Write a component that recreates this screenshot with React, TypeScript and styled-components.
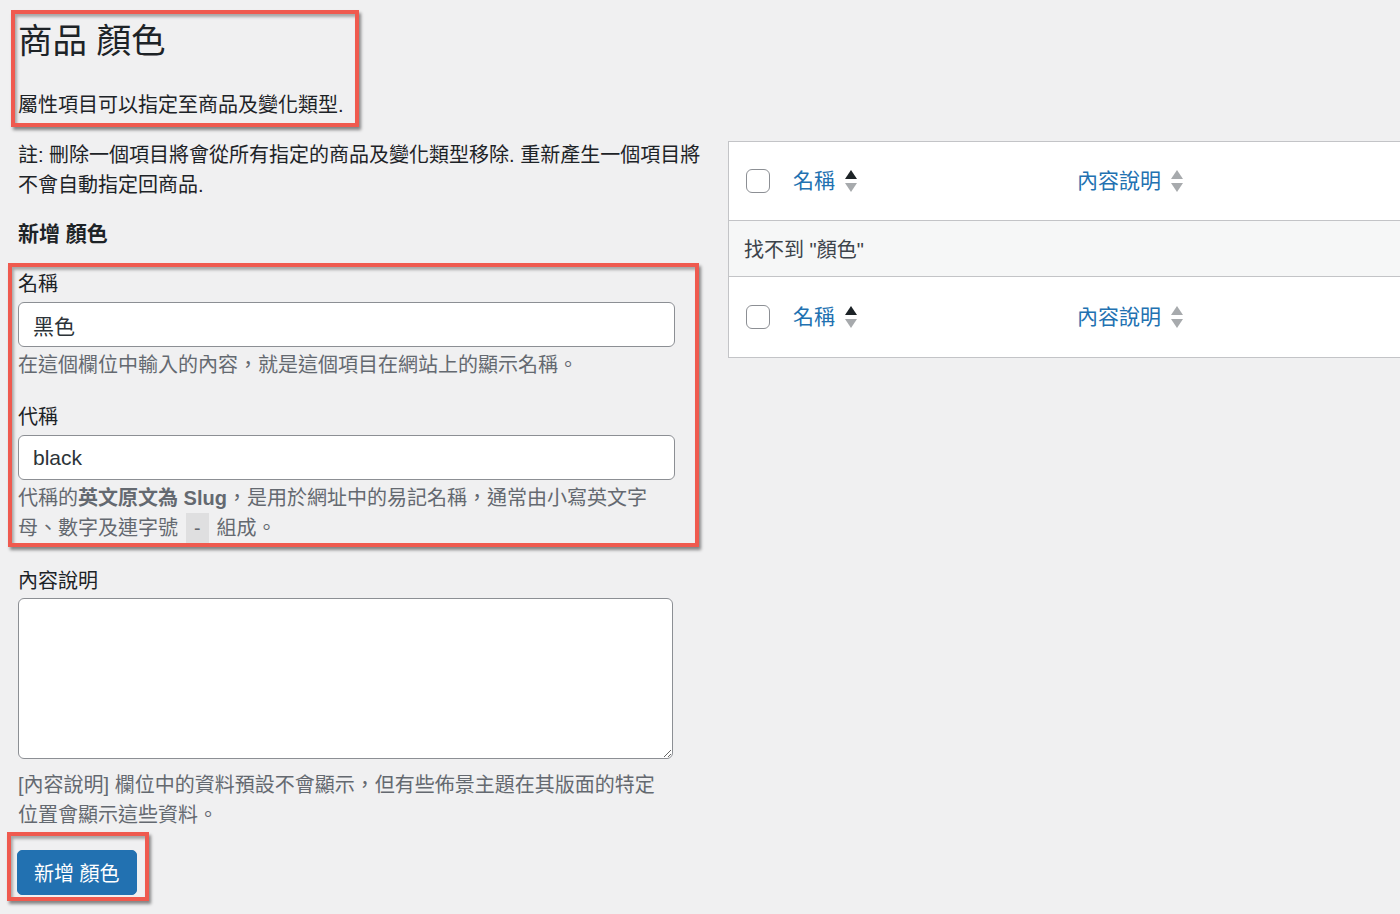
import React from "react";
import styled, { createGlobalStyle } from "styled-components";

const GlobalStyle = createGlobalStyle`
  html, body { margin: 0; padding: 0; background: #f0f0f1; }
  body {
    font-family: "Liberation Sans", "Noto Sans CJK TC", sans-serif;
    color: #1d2327;
    overflow: hidden;
  }
  * { box-sizing: border-box; }
`;

const Page = styled.div`
  width: 1400px;
  height: 914px;
  overflow: hidden;
  padding: 19px 0 0 18px;
`;

const Annotated = styled.div`
  position: relative;
`;

const Highlight = styled.div<{ $top: number; $left: number; $right: number; $bottom: number }>`
  position: absolute;
  top: ${(p) => p.$top}px;
  left: ${(p) => p.$left}px;
  right: ${(p) => p.$right}px;
  bottom: ${(p) => p.$bottom}px;
  border: 4px solid #ef5a4f;
  box-shadow: 2px 3px 3px rgba(0, 0, 0, 0.45), inset 2px 3px 3px rgba(0, 0, 0, 0.3);
  pointer-events: none;
`;

const Header = styled.header`
  position: relative;
  width: 341px;
`;

const Title = styled.h1`
  margin: 0;
  font-size: 34.5px;
  line-height: 44px;
  font-weight: 400;
  color: #1d2327;
`;

const Lead = styled.p`
  margin: 27px 0 0;
  font-size: 20px;
  line-height: 30px;
  white-space: nowrap;
`;

const Columns = styled.div`
  display: flex;
  align-items: flex-start;
  gap: 20px;
  margin-top: 20px;
`;

const LeftCol = styled.div`
  flex: none;
  width: 690px;
`;

const RightCol = styled.div`
  flex: none;
  width: 700px;
  margin-top: 1px;
`;

const Note = styled.p`
  margin: 0;
  font-size: 20px;
  line-height: 30px;
`;

const FormTitle = styled.h2`
  margin: 19px 0 0;
  font-size: 21px;
  line-height: 30px;
  font-weight: 700;
`;

const Fields = styled(Annotated)`
  margin-top: 20px;
`;

const Field = styled.div<{ $gap?: number }>`
  margin-top: ${(p) => p.$gap ?? 0}px;
`;

const Label = styled.label`
  display: block;
  font-size: 20px;
  line-height: 30px;
  color: #1d2327;
`;

const TextInput = styled.input`
  display: block;
  margin-top: 3px;
  width: 657px;
  height: 45px;
  padding: 0 14px;
  border: 1px solid #8c8f94;
  border-radius: 6px;
  background: #fff;
  font-family: inherit;
  font-size: 21px;
  color: #2c3338;
  outline: none;
`;

const TextArea = styled.textarea`
  display: block;
  margin-top: 2px;
  width: 655px;
  height: 161px;
  padding: 8px 12px;
  border: 1px solid #8c8f94;
  border-radius: 6px;
  background: #fff;
  font-family: inherit;
  font-size: 21px;
  color: #2c3338;
  outline: none;
`;

const Help = styled.p<{ $gap?: number }>`
  margin: ${(p) => p.$gap ?? 3}px 0 0;
  max-width: 645px;
  font-size: 20px;
  line-height: 30px;
  color: #646970;

  strong {
    font-weight: 700;
  }
`;

const Code = styled.code`
  display: inline-block;
  margin: 0 8px;
  padding: 0 8px;
  background: rgba(0, 0, 0, 0.07);
  font-family: "Liberation Sans", sans-serif;
  font-size: 19.5px;
  line-height: 30px;
  color: #646970;
`;

const SubmitWrap = styled(Annotated)`
  display: inline-block;
  margin-top: 20px;
  margin-left: -1px;
`;

const PrimaryButton = styled.button`
  display: block;
  height: 45px;
  padding: 0 16px;
  border: 1px solid #2271b1;
  border-radius: 5px;
  background: #2271b1;
  color: #fff;
  font-family: inherit;
  font-size: 20px;
  cursor: pointer;
`;

const Table = styled.div`
  border: 1px solid #c3c4c7;
  background: #fff;
`;

const HeadRow = styled.div<{ $height: number; $last?: boolean }>`
  display: grid;
  grid-template-columns: 64px 284px 1fr;
  align-items: center;
  height: ${(p) => p.$height}px;
  border-bottom: ${(p) => (p.$last ? "none" : "1px solid #c3c4c7")};
`;

const CheckCell = styled.div`
  padding-left: 17px;
  display: flex;
  align-items: center;
`;

const CheckBox = styled.span`
  display: block;
  width: 24px;
  height: 24px;
  border: 1px solid #8c8f94;
  border-radius: 6px;
  background: #fff;
`;

const SortLink = styled.a`
  display: flex;
  align-items: center;
  gap: 10px;
  color: #2271b1;
  font-size: 21px;
  line-height: 30px;
  text-decoration: none;
`;

const EmptyRow = styled.div`
  height: 56px;
  padding-left: 15px;
  display: flex;
  align-items: center;
  background: #f6f7f7;
  border-bottom: 1px solid #c3c4c7;
  font-size: 20px;
  color: #3c434a;
`;

const SortIcon = ({ active }: { active: boolean }) => (
  <svg width="12" height="24" viewBox="0 0 12 24" aria-hidden="true">
    <polygon points="0,10 6,1 12,10" fill={active ? "#1d2327" : "#a7aaad"} />
    <polygon points="0,14 12,14 6,23" fill="#a7aaad" />
  </svg>
);

const TableHeader = ({ height, last }: { height: number; last?: boolean }) => (
  <HeadRow $height={height} $last={last}>
    <CheckCell>
      <CheckBox />
    </CheckCell>
    <SortLink>
      名稱 <SortIcon active />
    </SortLink>
    <SortLink>
      內容說明 <SortIcon active={false} />
    </SortLink>
  </HeadRow>
);

export default function App() {
  return (
    <>
      <GlobalStyle />
      <Page>
        <Header>
          <Title>商品 顏色</Title>
          <Lead>屬性項目可以指定至商品及變化類型.</Lead>
          <Highlight $top={-9} $left={-7} $right={-0} $bottom={-7} />
        </Header>

        <Columns>
          <LeftCol>
            <Note>
              註: 刪除一個項目將會從所有指定的商品及變化類型移除. 重新產生一個項目將不會自動指定回商品.
            </Note>
            <FormTitle>新增 顏色</FormTitle>

            <Fields>
              <Field>
                <Label>名稱</Label>
                <TextInput defaultValue="黑色" />
                <Help>在這個欄位中輸入的內容，就是這個項目在網站上的顯示名稱。</Help>
              </Field>
              <Field $gap={22}>
                <Label>代稱</Label>
                <TextInput defaultValue="black" />
                <Help>
                  代稱的<strong>英文原文為 Slug</strong>，是用於網址中的易記名稱，通常由小寫英文字母、數字及連字號
                  <Code>-</Code>組成。
                </Help>
              </Field>
              <Highlight $top={-6} $left={-10} $right={9} $bottom={-4} />
            </Fields>

            <Field $gap={23}>
              <Label>內容說明</Label>
              <TextArea />
              <Help $gap={11}>
                [內容說明] 欄位中的資料預設不會顯示，但有些佈景主題在其版面的特定位置會顯示這些資料。
              </Help>
            </Field>

            <SubmitWrap>
              <PrimaryButton>新增 顏色</PrimaryButton>
              <Highlight $top={-18} $left={-10} $right={-12} $bottom={-6} />
            </SubmitWrap>
          </LeftCol>

          <RightCol>
            <Table>
              <TableHeader height={79} />
              <EmptyRow>找不到 "顏色"</EmptyRow>
              <TableHeader height={80} last />
            </Table>
          </RightCol>
        </Columns>
      </Page>
    </>
  );
}
